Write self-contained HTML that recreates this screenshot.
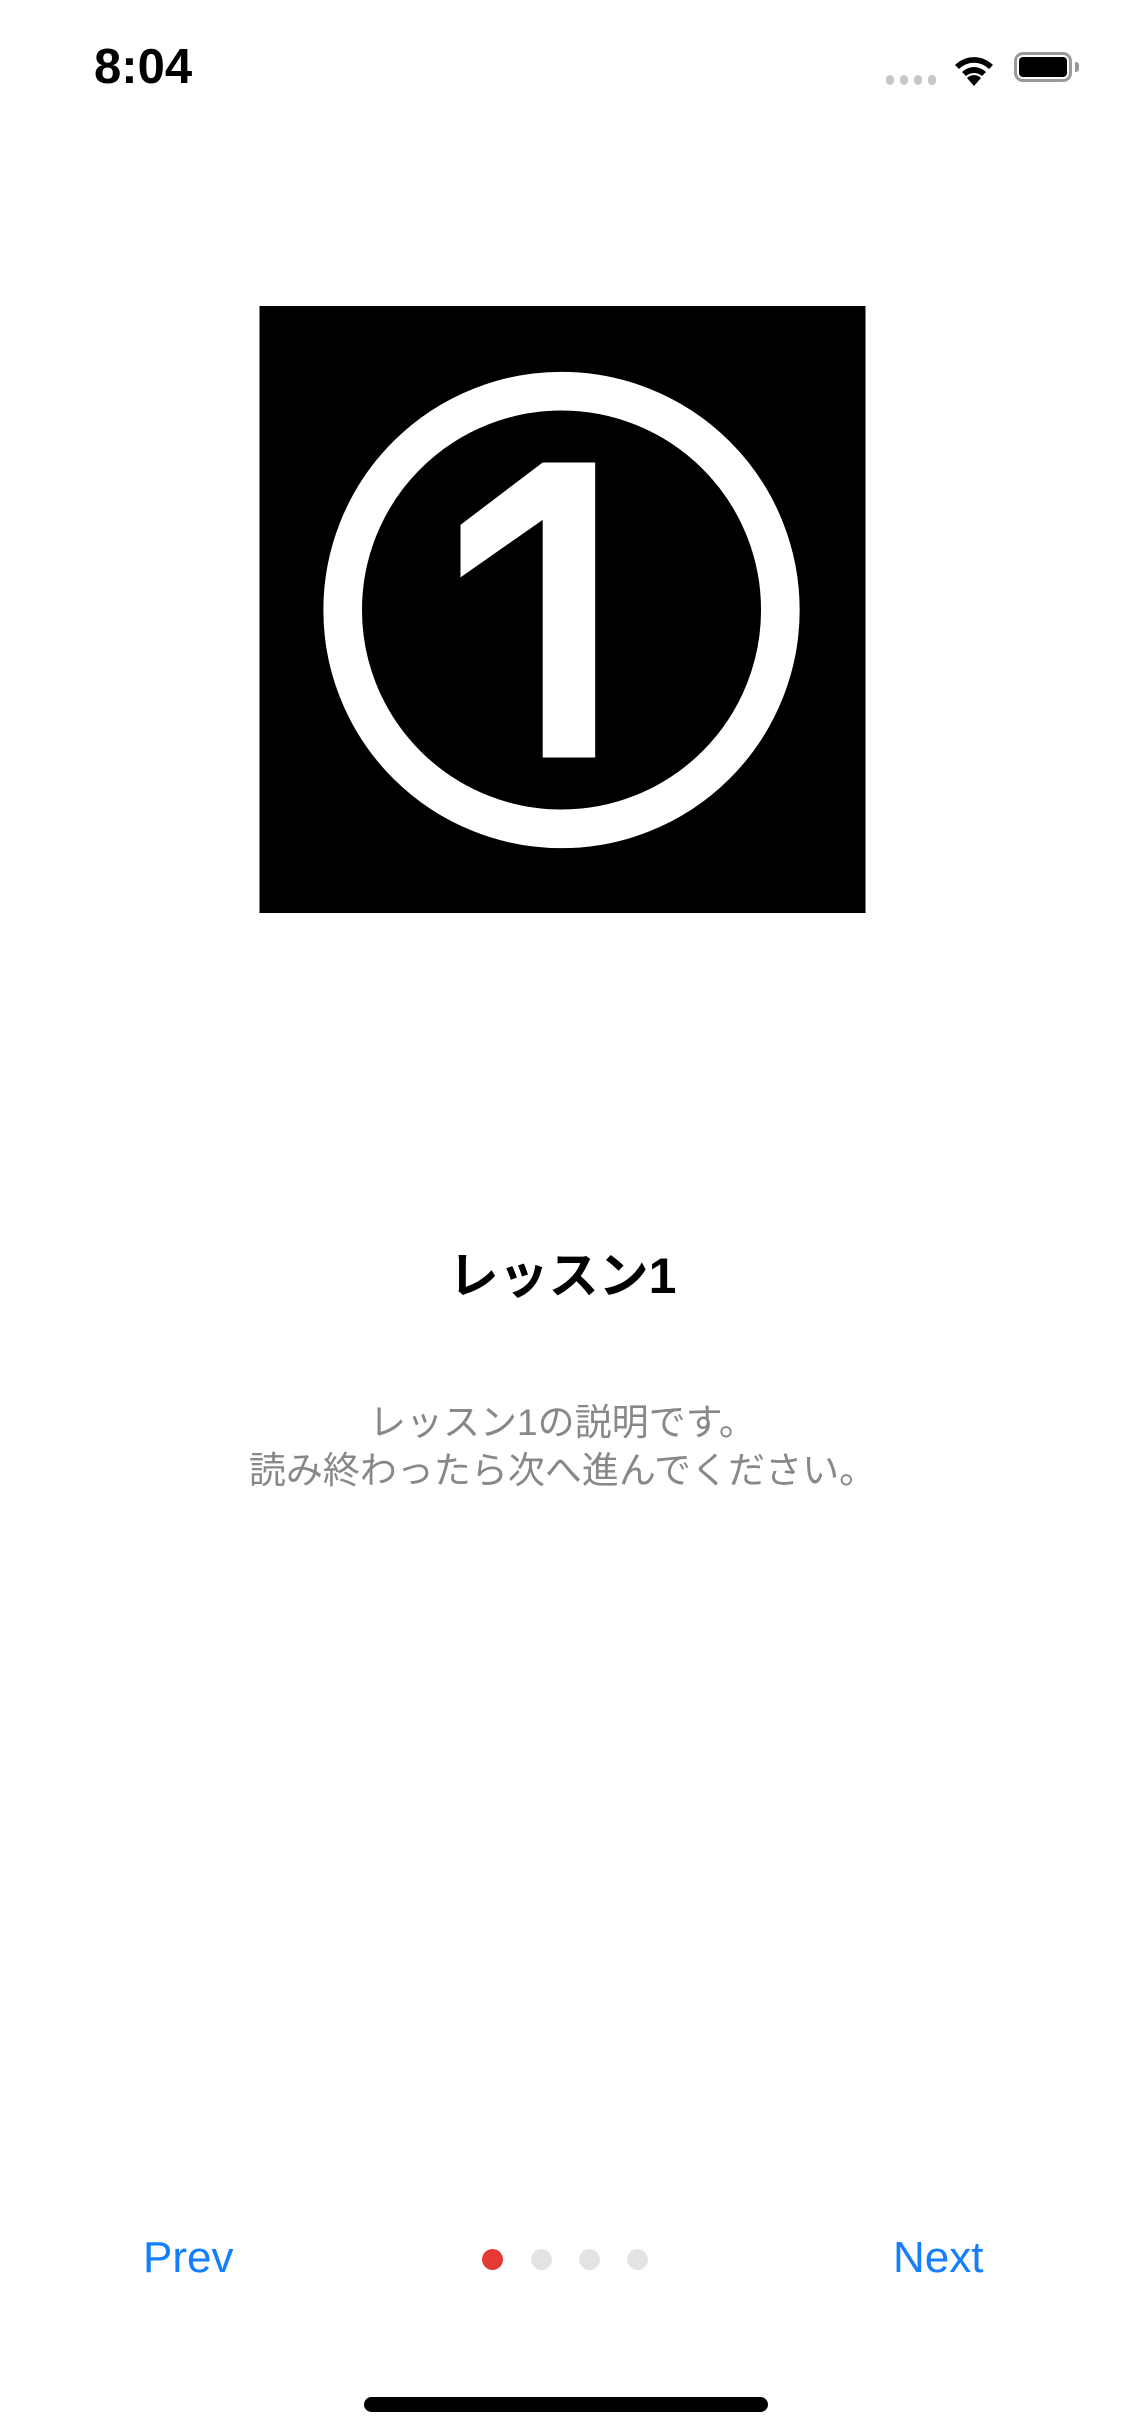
<!DOCTYPE html>
<html><head><meta charset="utf-8"><style>
html,body{margin:0;padding:0;background:#fff;}
body{width:1125px;height:2436px;position:relative;overflow:hidden;font-family:"Liberation Sans","Noto Sans CJK JP",sans-serif;}
.abs{position:absolute;}
</style></head><body>
<div class="abs" style="left:94px;top:38px;font-size:49px;font-weight:bold;line-height:58px;">8:04</div>
<div class="abs" style="left:886px;top:75px;width:8px;height:10px;border-radius:4px;background:#c8c8c8"></div>
<div class="abs" style="left:900px;top:75px;width:8px;height:10px;border-radius:4px;background:#c8c8c8"></div>
<div class="abs" style="left:914px;top:75px;width:8px;height:10px;border-radius:4px;background:#c8c8c8"></div>
<div class="abs" style="left:928px;top:75px;width:8px;height:10px;border-radius:4px;background:#c8c8c8"></div>
<svg class="abs" style="left:950px;top:50px" width="48" height="36" viewBox="0 0 48 36">
<path d="M24 36 L17 28 A10 10 0 0 1 31 28 Z" fill="#000"/>
<path d="M12 22 A17 17 0 0 1 36 22 L32 26 A12 12 0 0 0 16 26 Z" fill="#000"/>
<path d="M5 15 A27 27 0 0 1 43 15 L39 19 A21 21 0 0 0 9 19 Z" fill="#000"/>
</svg>
<div class="abs" style="left:1014px;top:52px;width:58px;height:30px;border:3px solid #999;border-radius:9px;box-sizing:border-box;"></div>
<div class="abs" style="left:1019px;top:57px;width:48px;height:20px;background:#000;border-radius:4px;"></div>
<div class="abs" style="left:1075px;top:62px;width:4px;height:10px;background:#999;border-radius:0 3px 3px 0;"></div>

<svg class="abs" style="left:259px;top:306px" width="607" height="607" viewBox="259 306 612 613">
<rect x="259" y="306" width="612" height="613" fill="#000"/>
<circle cx="564" cy="613" r="221" fill="none" stroke="#fff" stroke-width="39"/>
<polygon points="545,464 598,464 598,762 545,762 545,522 462,580 462,527" fill="#fff"/>
</svg>

<div class="abs" style="left:0;width:1125px;top:1244px;text-align:center;font-size:50px;font-weight:bold;line-height:64px;">レッスン1</div>
<div class="abs" style="left:0;width:1125px;top:1399px;text-align:center;font-size:37px;color:#888;line-height:48px;">レッスン1の説明です。<br>読み終わったら次へ進んでください。</div>

<div class="abs" style="left:143px;top:2230px;font-size:44px;color:#147efb;line-height:56px;">Prev</div>
<div class="abs" style="left:893px;top:2230px;font-size:44px;color:#147efb;line-height:56px;">Next</div>
<div class="abs" style="left:482px;top:2249px;width:21px;height:21px;border-radius:50%;background:#e53935"></div>
<div class="abs" style="left:531px;top:2249px;width:21px;height:21px;border-radius:50%;background:#e3e3e3"></div>
<div class="abs" style="left:579px;top:2249px;width:21px;height:21px;border-radius:50%;background:#e3e3e3"></div>
<div class="abs" style="left:627px;top:2249px;width:21px;height:21px;border-radius:50%;background:#e3e3e3"></div>
<div class="abs" style="left:364px;top:2397px;width:404px;height:15px;border-radius:8px;background:#000"></div>
</body></html>
